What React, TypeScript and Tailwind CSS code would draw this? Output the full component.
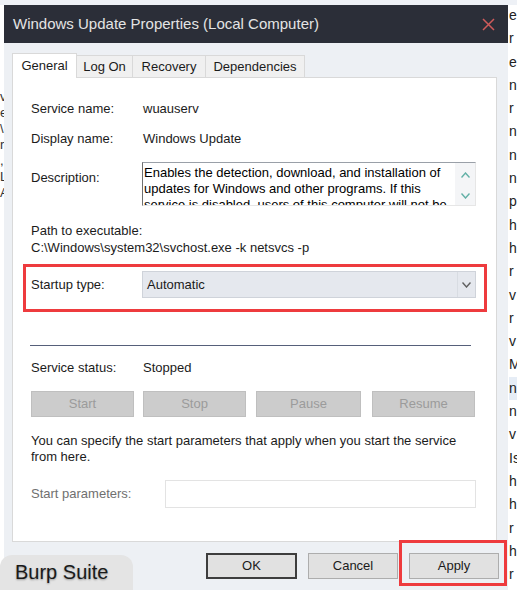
import type { ReactNode } from 'react'

const rightLetters = ['e', 'r', 'e', 'n', 'r', 'n', 'n', 'n', 'p', 'h', 'h', 'r', 'v', 'r', 'v', 'M', 'n', 'n', 'v', 'Is', 'h', 'h', 'r', 'h', 'r']
const leftLetters = ['v', 'e', '\\', 'r', ',', 'L', 'A']

function Row({ label, children }: { label: string; children?: ReactNode }) {
  return (
    <div className="flex h-[16px] leading-[16px]">
      <span className="w-[112px] shrink-0">{label}</span>
      <span>{children}</span>
    </div>
  )
}

function Chevron({ up, color }: { up?: boolean; color: string }) {
  return (
    <svg width="9" height="6" viewBox="0 0 9 6" fill="none">
      <path d={up ? 'M0.5 5.5 L4.5 1 L8.5 5.5' : 'M0.5 0.5 L4.5 5 L8.5 0.5'} stroke={color} strokeWidth="1.4" />
    </svg>
  )
}

function DisabledButton({ label, className }: { label: string; className: string }) {
  return (
    <div className={`flex h-[26px] items-center justify-center border border-[#bfbfbf] bg-[#cccccc] text-[#9b9b9b] ${className}`}>
      {label}
    </div>
  )
}

function Dialog() {
  return (
    <div className="absolute left-[4px] top-[5px] flex h-[585px] w-[504px] flex-col bg-[#edf0f4]">
      {/* title bar */}
      <div className="flex h-[38px] shrink-0 items-center justify-between bg-[#2b2e38] pl-[9px] pr-[13px] pt-[1px]">
        <span className="text-[15px] text-[#e4e4e4]">Windows Update Properties (Local Computer)</span>
        <svg width="13" height="13" viewBox="0 0 13 13">
          <path d="M1 1 L12 12 M12 1 L1 12" stroke="#cf5b5b" strokeWidth="1.5" />
        </svg>
      </div>

      <div className="flex flex-col pl-[8px] pr-[11px] pt-[10px]">
        {/* tabs */}
        <div className="relative z-10 -mb-px flex h-[25px] items-end">
          <div className="flex h-[25px] w-[65px] items-center justify-center border border-b-0 border-[#d9d9d9] bg-white">General</div>
          <div className="flex h-[23px] w-[56px] items-center justify-center border-y border-r border-[#d9d9d9] bg-[#f0f0f0]">Log On</div>
          <div className="flex h-[23px] w-[73px] items-center justify-center border-y border-r border-[#d9d9d9] bg-[#f0f0f0]">Recovery</div>
          <div className="flex h-[23px] w-[99px] items-center justify-center border-y border-r border-[#d9d9d9] bg-[#f0f0f0]">Dependencies</div>
        </div>

        {/* panel */}
        <div className="flex h-[465px] flex-col border border-[#d9d9d9] bg-white pl-[18px]">
          <div className="mt-[23px]">
            <Row label="Service name:">wuauserv</Row>
          </div>
          <div className="mt-[14px]">
            <Row label="Display name:">Windows Update</Row>
          </div>

          <div className="mt-[15px] flex">
            <span className="w-[111px] shrink-0 pt-[8px] leading-[16px]">Description:</span>
            <div className="flex h-[44px] w-[334px] border-b border-l border-r border-t border-b-[#e6e6e6] border-l-[#6f6f6f] border-r-[#e6e6e6] border-t-[#9aa0a8]">
              <div className="flex-1 overflow-hidden whitespace-nowrap pl-[1px] pt-[2px] leading-[16px] text-black">
                <div>Enables the detection, download, and installation of</div>
                <div>updates for Windows and other programs. If this</div>
                <div>service is disabled, users of this computer will not be</div>
              </div>
              <div className="flex w-[20px] flex-col items-center justify-between bg-[#f4f5f7] pb-[6px] pt-[9px]">
                <Chevron up color="#62b0a6" />
                <Chevron color="#62b0a6" />
              </div>
            </div>
          </div>

          <div className="mt-[17px] h-[16px] leading-[16px]">Path to executable:</div>
          <div className="mt-[1px] h-[16px] leading-[16px]">C:\Windows\system32\svchost.exe -k netsvcs -p</div>

          {/* startup type, highlighted */}
          <div className="-ml-[8px] mt-[8px] h-[48px] w-[464px] border-[3px] border-[#ee3b3e] pl-[5px] pt-[4px]">
            <div className="flex h-[27px] items-center">
              <span className="w-[111px] shrink-0">Startup type:</span>
              <div className="flex h-[27px] w-[334px] items-center justify-between border border-[#cfd3da] bg-[#e5e8ee]">
                <span className="pl-[4px]">Automatic</span>
                <div className="flex h-[25px] w-[18px] items-center justify-center border-l border-[#d8dce2]">
                  <Chevron color="#5f5f5f" />
                </div>
              </div>
            </div>
          </div>

          <div className="-ml-[1px] mt-[33px] h-[1px] w-[441px] bg-[#56607a]" />

          <div className="mt-[14px]">
            <Row label="Service status:">Stopped</Row>
          </div>

          <div className="mt-[15px] flex">
            <DisabledButton label="Start" className="w-[103px]" />
            <DisabledButton label="Stop" className="ml-[9px] w-[103px]" />
            <DisabledButton label="Pause" className="ml-[10px] w-[105px]" />
            <DisabledButton label="Resume" className="ml-[11px] w-[103px]" />
          </div>

          <div className="mt-[16px] leading-[16px]">
            <div>You can specify the start parameters that apply when you start the service</div>
            <div>from here.</div>
          </div>

          <div className="mt-[15px] flex h-[28px] items-center">
            <span className="w-[134px] shrink-0 text-[#707070]">Start parameters:</span>
            <div className="h-[28px] w-[311px] border border-[#e3e3e3] bg-white" />
          </div>
        </div>

        {/* dialog buttons */}
        <div className="-mr-[2px] mt-[11px] flex justify-end gap-[11px]">
          <div className="flex h-[26px] w-[91px] items-center justify-center border-2 border-[#3d3d3d] bg-[#e1e1e1]">OK</div>
          <div className="flex h-[26px] w-[90px] items-center justify-center border border-[#adadad] bg-[#e1e1e1]">Cancel</div>
          <div className="relative flex h-[26px] w-[90px] items-center justify-center border border-[#adadad] bg-[#e1e1e1]">
            Apply
            <div className="absolute -bottom-[8px] -left-[11px] -right-[9px] -top-[14px] border-[3px] border-[#ee3b3e]" />
          </div>
        </div>
      </div>
    </div>
  )
}

export default function App() {
  return (
    <div className="relative h-[590px] w-[517px] overflow-hidden bg-white font-['Liberation_Sans',Arial,sans-serif] text-[13px] text-[#1b1b1b]">
      <div className="h-[5px] bg-[#eef1f6]" />

      {/* window behind the dialog */}
      <div className="absolute left-0 top-[89px] flex flex-col text-[13px] leading-[16px] text-[#333]">
        {leftLetters.map((l, i) => (
          <span key={i}>{l}</span>
        ))}
      </div>
      <div className="absolute left-[509px] top-[4px] flex w-[20px] flex-col text-[14px] leading-[23.3px] text-[#222]">
        {rightLetters.map((l, i) => (
          <span key={i} className={i === 16 ? 'bg-[#e6edf6]' : ''}>{l}</span>
        ))}
      </div>

      <Dialog />

      <div className="absolute left-0 top-[555px] h-[40px] w-[133px] rounded-t-[12px] bg-[#e4e4e4] pl-[15px] pt-[5px] text-[20px] leading-[24px] text-[#1a1a1a] [text-shadow:0_1px_2px_rgba(0,0,0,0.35)]">
        Burp Suite
      </div>
    </div>
  )
}
